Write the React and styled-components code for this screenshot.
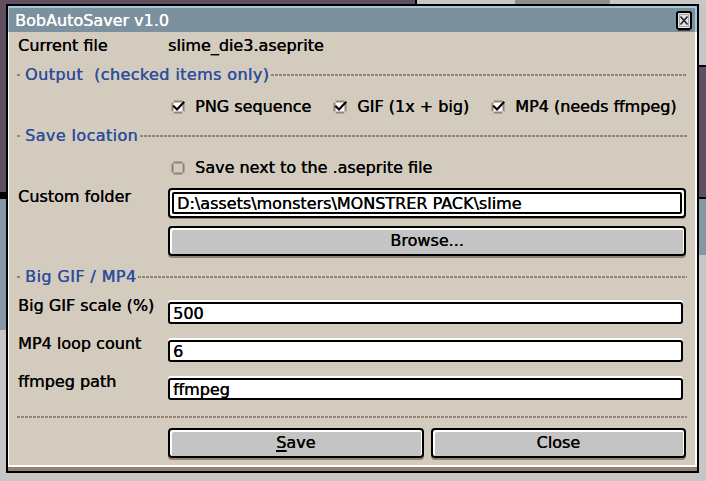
import React from "react";
import styled, { createGlobalStyle } from "styled-components";

const Global = createGlobalStyle`
  html, body { margin: 0; padding: 0; background: #5e5060; }
  * { box-sizing: border-box; }
  body { font-family: "DejaVu Sans", "Liberation Sans", sans-serif; }
`;

const FONT = `"DejaVu Sans", "Liberation Sans", sans-serif`;
const FACE = "#d3cbbe";
const DARK = "#968275";

const Desktop = styled.div`
  position: relative;
  width: 706px;
  height: 481px;
  overflow: hidden;
  background:
    linear-gradient(#000, #000) 415px 0 / 2px 4px no-repeat,
    linear-gradient(#c8c8c8, #c8c8c8) 417px 0 / 98px 4px no-repeat,
    linear-gradient(#8e8e8e, #8e8e8e) 515px 0 / 95px 4px no-repeat,
    linear-gradient(#c8c8c8, #c8c8c8) 610px 0 / 96px 4px no-repeat,
    linear-gradient(#c6c6c6, #c6c6c6) 699px 0 / 7px 65px no-repeat,
    linear-gradient(#000, #000) 699px 65px / 7px 2px no-repeat,
    linear-gradient(#000, #000) 699px 197px / 7px 2px no-repeat,
    linear-gradient(#8497a4, #8497a4) 699px 199px / 7px 56px no-repeat,
    linear-gradient(#c6c6c6, #c6c6c6) 699px 255px / 7px 226px no-repeat,
    linear-gradient(#000, #000) 0 192px / 6px 7px no-repeat,
    linear-gradient(#8497a4, #8497a4) 0 199px / 6px 131px no-repeat,
    linear-gradient(#c6c6c6, #c6c6c6) 0 330px / 6px 151px no-repeat,
    linear-gradient(#c6c6c6, #c6c6c6) 0 473px / 706px 8px no-repeat,
    #5e5060;
`;

const Window = styled.div`
  position: absolute;
  left: 6px;
  top: 4px;
  width: 693px;
  height: 469px;
  border: 2px solid #000;
  display: flex;
  flex-direction: column;
  font-family: ${FONT};
  font-size: 16px;
  color: #000;
  text-shadow: 0.35px 0 0 currentColor;
`;

const TitleBar = styled.div`
  height: 26px;
  flex: none;
  display: flex;
  align-items: flex-start;
  padding-left: 7px;
  background: #7d909d;
  box-shadow: inset 0 2px 0 #a8c6da, inset 1px 0 0 #a8c6da, inset -2px 0 0 #a8c6da;
`;

const TitleText = styled.span`
  color: #fff;
  line-height: 20px;
  margin-top: 5px;
  white-space: nowrap;
`;

const CloseBox = styled.span`
  margin-left: auto;
  margin-top: 5px;
  margin-right: 5px;
  width: 16px;
  height: 20px;
  display: block;
`;

const Body = styled.div`
  flex: 1;
  display: flex;
  flex-direction: column;
  padding: 4px 10px 0 9px;
  background: ${FACE};
  box-shadow: inset 0 -4px 0 ${DARK}, inset 0 -6px 0 #fff, inset 1px 0 0 #fff,
    inset -2px 0 0 #fff;
`;

const FieldRow = styled.div`
  display: grid;
  grid-template-columns: 151px 1fr;
  align-items: start;
  margin-top: ${(p) => p.$mt || 0}px;
`;

const Label = styled.div`
  line-height: 20px;
  padding-left: 1px;
  white-space: nowrap;
`;

const Value = styled.div`
  line-height: 20px;
  white-space: nowrap;
`;

const SepRow = styled.div`
  display: flex;
  align-items: center;
  height: 20px;
  margin-top: ${(p) => p.$mt || 0}px;
`;

const Dash = styled.span`
  display: block;
  height: 2px;
  flex: ${(p) => (p.$grow ? "1" : "none")};
  width: ${(p) => (p.$grow ? "auto" : "4px")};
  background: repeating-linear-gradient(
    90deg,
    #968278 0 3px,
    transparent 3px 4px
  );
`;

const SepText = styled.span`
  color: #2c4e9c;
  line-height: 20px;
  padding: 0 2px 0 4px;
  letter-spacing: 0.4px;
  white-space: pre;
`;

const CheckGroup = styled.div`
  display: flex;
  align-items: center;
  gap: 22px;
  padding-left: 3px;
  height: 20px;
`;

const CheckItem = styled.label`
  display: flex;
  align-items: center;
  gap: 10px;
  line-height: 20px;
  white-space: nowrap;
`;

const CheckSvg = styled.svg`
  display: block;
  flex: none;
`;

const TextInput = styled.input`
  display: block;
  width: calc(100% - 4px);
  height: 22px;
  margin: 6px 0 0 0;
  padding: 0 3px;
  border: 2px solid #000;
  border-radius: 3px;
  background: #fff;
  color: #000;
  font-family: ${FONT};
  font-size: 16px;
  line-height: 18px;
  text-shadow: 0.35px 0 0 #000;
  outline: none;
  box-shadow: 0 -2px 0 #fff;
`;

const FocusRing = styled.div`
  margin: 1px 1px 0 0;
  padding: 2px;
  border: 2px solid #000;
  border-radius: 4px;
  background: #fff;
  box-shadow: 0 1px 0 ${DARK};
`;

const RingInput = styled(TextInput)`
  width: 100%;
  margin: 0;
  box-shadow: none;
  border-radius: 2px;
`;

const Button = styled.button`
  display: block;
  width: 100%;
  height: 30px;
  padding: 0;
  border: 2px solid #000;
  border-radius: 4px;
  background: #c4c4c4;
  color: #000;
  font-family: ${FONT};
  font-size: 16px;
  line-height: 24px;
  text-shadow: 0.35px 0 0 #000;
  box-shadow: inset 2px 2px 0 #fff, inset -1px 0 0 #fff, 0 2px 0 ${DARK};
  cursor: default;
`;

const ButtonPair = styled.div`
  display: grid;
  grid-template-columns: 1fr 1fr;
  gap: 7px;
  margin-right: 1px;
`;

const BrowseWrap = styled.div`
  margin-right: 1px;
`;

const Mnemonic = styled.span`
  text-decoration: underline;
  text-underline-offset: 2px;
  text-decoration-thickness: 2px;
`;

function CheckBox({ checked }) {
  return (
    <CheckSvg width="14" height="14" viewBox="0 0 14 14">
      <path
        d="M2 1 H12 V2 H13 V12 H12 V13 H2 V12 H1 V2 H2 Z"
        fill={checked ? "#fff" : "none"}
      />
      <path
        d="M2.5 1.5 H11.5 M12.5 2.5 V11.5 M11.5 12.5 H2.5 M1.5 11.5 V2.5"
        stroke={DARK}
        strokeWidth="2"
        fill="none"
      />
      {checked && (
        <path
          d="M3 6.5 L6 9.5 L12.5 2.5"
          stroke="#000"
          strokeWidth="2.2"
          fill="none"
          strokeLinecap="square"
        />
      )}
    </CheckSvg>
  );
}

function CloseIcon() {
  return (
    <svg width="16" height="20" viewBox="0 0 16 20" style={{ display: "block" }}>
      <rect x="2" y="18" width="12" height="2" fill="#4d4048" />
      <rect x="1" y="1" width="14" height="17" rx="2" fill="#e4e4e4" stroke="#000" strokeWidth="2" />
      <rect x="3.5" y="3.5" width="9" height="12" fill="none" stroke="#a8a8a8" strokeWidth="1" />
      <path d="M4.5 5.5 L11.5 13.5 M11.5 5.5 L4.5 13.5" stroke="#222" strokeWidth="1.6" />
    </svg>
  );
}

function Separator({ mt, children }) {
  return (
    <SepRow $mt={mt}>
      {children ? (
        <>
          <Dash />
          <SepText>{children}</SepText>
          <Dash $grow />
        </>
      ) : (
        <Dash $grow />
      )}
    </SepRow>
  );
}

export default function App() {
  return (
    <Desktop>
      <Global />
      <Window>
        <TitleBar>
          <TitleText>BobAutoSaver v1.0</TitleText>
          <CloseBox>
            <CloseIcon />
          </CloseBox>
        </TitleBar>
        <Body>
          <FieldRow>
            <Label>Current file</Label>
            <Value>slime_die3.aseprite</Value>
          </FieldRow>

          <Separator mt={9}>{"Output  (checked items only)"}</Separator>

          <FieldRow $mt={12}>
            <div />
            <CheckGroup>
              <CheckItem>
                <CheckBox checked />
                PNG sequence
              </CheckItem>
              <CheckItem>
                <CheckBox checked />
                GIF (1x + big)
              </CheckItem>
              <CheckItem>
                <CheckBox checked />
                MP4 (needs ffmpeg)
              </CheckItem>
            </CheckGroup>
          </FieldRow>

          <Separator mt={9}>Save location</Separator>

          <FieldRow $mt={12}>
            <div />
            <CheckGroup>
              <CheckItem>
                <CheckBox />
                Save next to the .aseprite file
              </CheckItem>
            </CheckGroup>
          </FieldRow>

          <FieldRow $mt={9}>
            <Label>Custom folder</Label>
            <FocusRing>
              <RingInput readOnly value={"D:\\assets\\monsters\\MONSTRER PACK\\slime"} />
            </FocusRing>
          </FieldRow>

          <FieldRow $mt={8}>
            <div />
            <BrowseWrap>
              <Button>Browse...</Button>
            </BrowseWrap>
          </FieldRow>

          <Separator mt={11}>Big GIF / MP4</Separator>

          <FieldRow $mt={9}>
            <Label>Big GIF scale (%)</Label>
            <TextInput readOnly value="500" />
          </FieldRow>
          <FieldRow $mt={10}>
            <Label>MP4 loop count</Label>
            <TextInput readOnly value="6" />
          </FieldRow>
          <FieldRow $mt={10}>
            <Label>ffmpeg path</Label>
            <TextInput readOnly value="ffmpeg" />
          </FieldRow>

          <Separator mt={7} />

          <FieldRow $mt={1}>
            <div />
            <ButtonPair>
              <Button>
                <Mnemonic>S</Mnemonic>ave
              </Button>
              <Button>Close</Button>
            </ButtonPair>
          </FieldRow>
        </Body>
      </Window>
    </Desktop>
  );
}
